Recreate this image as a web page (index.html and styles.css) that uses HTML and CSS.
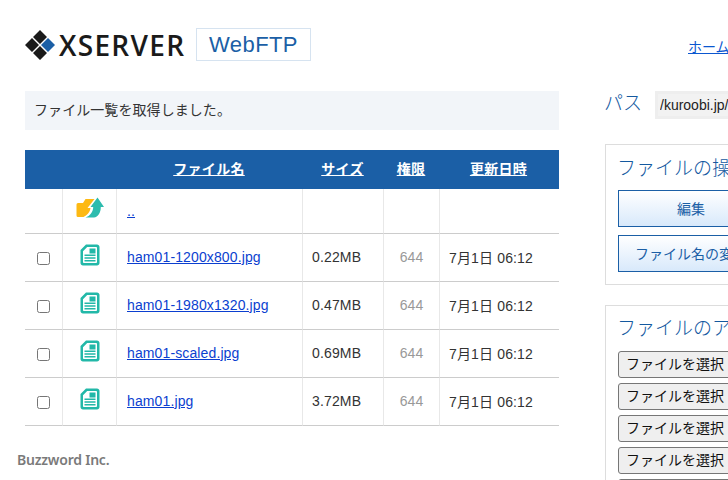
FILE: index.html
```html
<!DOCTYPE html>
<html lang="ja">
<head>
<meta charset="utf-8">
<title>WebFTP</title>
<link rel="stylesheet" href="styles.css">
</head>
<body>
<div class="page">
  <header class="header">
    <div class="logo">
      <svg class="logo-mark" width="30" height="30" viewBox="0 0 30 30">
        <path fill="#1a1a1a" d="M15 0l7 7-7 7-7-7zM7 8l7 7-7 7-7-7zM15 16l7 7-7 7-7-7z"/>
        <path fill="#1b5fa6" d="M23 8l7 7-7 7-7-7z"/>
      </svg>
      <span class="logo-text">XSERVER</span>
    </div>
    <div class="product">WebFTP</div>
    <a class="home" href="#">ホームへ戻る</a>
  </header>
  <div class="columns">
    <main class="left">
      <p class="notice">ファイル一覧を取得しました。</p>
      <table class="files">
        <thead>
          <tr>
            <th class="c-check"></th>
            <th class="c-icon"></th>
            <th class="c-name"><a href="#">ファイル名</a></th>
            <th class="c-size"><a href="#">サイズ</a></th>
            <th class="c-perm"><a href="#">権限</a></th>
            <th class="c-date"><a href="#">更新日時</a></th>
          </tr>
        </thead>
        <tbody>
          <tr class="up">
            <td></td>
            <td class="icon-cell">
              <svg class="up-icon" width="30" height="21" viewBox="0 0 30 21">
                <path fill="#fdb913" d="M1.500 7.500Q1.500 6 3 6H8L10.500 2H19.500L12.500 11H15.500C15 15 12 18.500 8.500 20H3Q1.500 20 1.500 18.500z"/>
                <path fill="#2dbcae" d="M22.500 .5L29 10H25.800C25.800 16 23 20 19 20.500H10.500C15 19 18.200 15 18.200 10H15.500z"/>
              </svg>
            </td>
            <td><a href="#">..</a></td>
            <td></td><td></td><td></td>
          </tr>
          <tr>
            <td class="check-cell"><input type="checkbox"></td>
            <td class="icon-cell"><svg class="doc-icon" width="20" height="22" viewBox="0 0 20 22"><use href="#doc"/></svg></td>
            <td><a href="#">ham01-1200x800.jpg</a></td>
            <td class="num">0.22MB</td><td class="perm">644</td><td class="num">7月1日 06:12</td>
          </tr>
          <tr>
            <td class="check-cell"><input type="checkbox"></td>
            <td class="icon-cell"><svg class="doc-icon" width="20" height="22" viewBox="0 0 20 22"><use href="#doc"/></svg></td>
            <td><a href="#">ham01-1980x1320.jpg</a></td>
            <td class="num">0.47MB</td><td class="perm">644</td><td class="num">7月1日 06:12</td>
          </tr>
          <tr>
            <td class="check-cell"><input type="checkbox"></td>
            <td class="icon-cell"><svg class="doc-icon" width="20" height="22" viewBox="0 0 20 22"><use href="#doc"/></svg></td>
            <td><a href="#">ham01-scaled.jpg</a></td>
            <td class="num">0.69MB</td><td class="perm">644</td><td class="num">7月1日 06:12</td>
          </tr>
          <tr>
            <td class="check-cell"><input type="checkbox"></td>
            <td class="icon-cell"><svg class="doc-icon" width="20" height="22" viewBox="0 0 20 22"><use href="#doc"/></svg></td>
            <td><a href="#">ham01.jpg</a></td>
            <td class="num">3.72MB</td><td class="perm">644</td><td class="num">7月1日 06:12</td>
          </tr>
        </tbody>
      </table>
    </main>
    <aside class="right">
      <div class="path">
        <span class="path-label">パス</span>
        <input class="path-input" type="text" value="/kuroobi.jp/public_html/wp-content/uploads/" readonly>
      </div>
      <section class="panel ops">
        <h2>ファイルの操作</h2>
        <button class="action">編集</button>
        <button class="action">ファイル名の変更</button>
      </section>
      <section class="panel upload">
        <h2>ファイルのアップロード</h2>
        <div class="file-row"><button class="pick">ファイルを選択</button></div>
        <div class="file-row"><button class="pick">ファイルを選択</button></div>
        <div class="file-row"><button class="pick">ファイルを選択</button></div>
        <div class="file-row"><button class="pick">ファイルを選択</button></div>
        <div class="file-row"><button class="pick">ファイルを選択</button></div>
      </section>
    </aside>
  </div>
  <div class="credit">Buzzword Inc.</div>
</div>
<svg class="defs" width="0" height="0">
  <symbol id="doc" viewBox="0 0 20 22">
    <path fill="#22b8a8" fill-rule="evenodd" d="M6 .5H17C18.400 .5 19.500 1.600 19.500 3V19C19.500 20.400 18.400 21.500 17 21.500H3C1.600 21.500 .5 20.400 .5 19V6zM7.200 3L3 7.200V18.200C3 18.600 3.400 19 3.800 19H16.200C16.600 19 17 18.600 17 18.200V3.800C17 3.400 16.600 3 16.200 3z"/>
    <path fill="#22b8a8" d="M9.500 4.500H15.500V9.500H9.500zM4.500 10.500H15.500V12H4.500zM4.500 13.300H15.500V14.800H4.500zM4.500 16.100H15.500V17.600H4.500z"/>
  </symbol>
</svg>
</body>
</html>
```
FILE: styles.css
```css
* { box-sizing: border-box; }
html, body { margin: 0; padding: 0; height: 480px; overflow: hidden; background: #fff; }
body { font-family: "Liberation Sans", "Noto Sans CJK JP", sans-serif; font-size: 14px; color: #333; }
.page { position: relative; width: 728px; height: 480px; overflow: hidden; padding: 28px 0 0 25px; }
.header { display: flex; align-items: center; height: 33px; width: 800px; }
.logo { display: flex; align-items: center; width: 171px; }
.logo-mark { flex: none; }
.logo-text { font-family: "Open Sans", sans-serif; font-weight: 600; font-size: 28px; line-height: 30px; color: #1a1a1a; margin-left: 4px; letter-spacing: 1.3px; }
.product { width: 115px; height: 33px; border: 1px solid #d6e3f0; color: #1b5fa6; font-size: 22px; line-height: 31px; text-align: center; letter-spacing: .4px; }
.home { margin-left: 377px; color: #0b57d0; font-family: "Noto Sans CJK JP", sans-serif; font-size: 14px; margin-top: 3px; white-space: nowrap; }
.columns { display: flex; margin-top: 30px; width: 900px; }
.left { width: 534px; flex: none; }
.notice { margin: 0 0 20px; height: 39px; background: #f2f5f9; padding-left: 9px; font-family: "Noto Sans CJK JP", sans-serif; font-size: 14px; line-height: 37px; letter-spacing: .07px; color: #333; }
.files { width: 534px; border-collapse: separate; border-spacing: 0; table-layout: fixed; }
.files th { height: 39px; background: #1b5fa6; padding: 0 2px 4px 0; text-align: center; font-family: "Noto Sans CJK JP", sans-serif; font-size: 14px; font-weight: 700; letter-spacing: .3px; }
.files th a { color: #fff; }
.c-check { width: 38px; } .c-icon { width: 54px; } .c-name { width: 186px; } .c-size { width: 81px; } .c-perm { width: 56px; } .c-date { width: 119px; }
.files td { height: 48px; padding: 0 0 2px 10px; border-bottom: 1px solid #ccc; border-right: 1px solid #e8e8e8; font-size: 14px; color: #333; font-family: "Liberation Sans", "Noto Sans CJK JP", sans-serif; white-space: nowrap; overflow: hidden; }
.files td:last-child { border-right: 0; }
.files tr.up td { height: 45px; padding-top: 2px; }
.files td a { color: #0b3fd0; letter-spacing: .12px; }
.files td.num { padding-left: 9px; letter-spacing: .15px; }
.files td.icon-cell { padding: 0; text-align: center; line-height: 0; }
.files td.icon-cell .up-icon { position: relative; top: -5px; }
.files td.icon-cell .doc-icon { position: relative; top: -3px; }
.files td.check-cell { padding: 0 0 2px; text-align: center; }
.check-cell input { width: 13px; height: 13px; margin: 1px 0 0; vertical-align: middle; }
.files td.perm { text-align: center; padding: 0 0 2px; color: #999; }
.right { flex: none; width: 300px; margin-left: 46px; }
.path { display: flex; align-items: center; height: 28px; margin-bottom: 25px; }
.path-label { font-family: "Noto Sans CJK JP", sans-serif; font-size: 19px; font-weight: 300; color: #14599f; width: 50px; margin: -8px 1px 0 -1px; }
.path-input { width: 250px; height: 28px; border: 1px solid #ddd; border-width: 1px 0 1px 1px; background: #f2f2f2; padding: 0 0 0 4px; font-size: 14px; font-family: "Liberation Sans", sans-serif; color: #222; outline: 3px solid #eee; outline-offset: -3px; }
.panel { border: 1px solid #ddd; padding: 12px 12px 0; }
.panel h2 { margin: 0 0 0 -1px; font-family: "Noto Sans CJK JP", sans-serif; font-size: 19px; font-weight: 300; line-height: 20px; color: #14599f; white-space: nowrap; }
.ops { height: 141px; margin-bottom: 20px; }
.action { display: block; width: 146px; height: 37px; margin-top: 8px; background: linear-gradient(#ffffff, #d8e9fb); border: 1px solid #1b5fa6; color: #1b5fa6; font-family: "Noto Sans CJK JP", sans-serif; font-size: 14px; padding: 0 0 2px; white-space: nowrap; }
.ops h2 { margin-bottom: 13px; }
.ops .action:first-of-type { margin-top: 0; }
.upload { height: 300px; padding-top: 11px; }
.upload h2 { margin-bottom: 14px; }
.file-row { height: 32px; }
.pick { width: 123px; height: 27px; padding: 0 0 4px 7px; text-align: left; background: #efefef; border: 1px solid #767676; border-radius: 3px; font-family: "Noto Sans CJK JP", sans-serif; font-size: 14px; color: #111; white-space: nowrap; }
.credit { position: absolute; left: 17px; top: 450px; font-family: "Noto Sans", sans-serif; font-weight: 600; font-size: 14px; line-height: 20px; letter-spacing: -.22px; color: #7a7a7a; }
.defs { position: absolute; }
```
